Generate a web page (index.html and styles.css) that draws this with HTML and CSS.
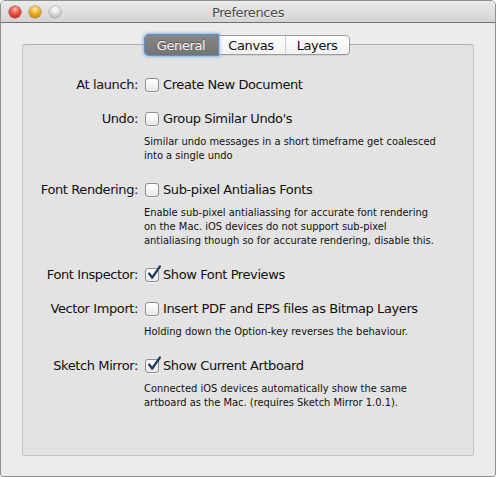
FILE: index.html
```html
<!DOCTYPE html>
<html>
<head>
<meta charset="utf-8">
<link rel="stylesheet" href="styles.css">
</head>
<body>
<div class="window">
  <div class="titlebar">
    <div class="lights">
      <span class="light red"></span>
      <span class="light yellow"></span>
      <span class="light gray"></span>
    </div>
    <div class="title">Preferences</div>
    <div></div>
  </div>
  <div class="content">
    <div class="tabs">
      <span class="tab selected">General</span>
      <span class="tab canvas">Canvas</span>
      <span class="tab layers">Layers</span>
    </div>
    <div class="box">
      <div class="form">
        <div class="label">At launch:</div>
        <div class="field">
          <label class="check"><span class="cb"></span>Create New Document</label>
        </div>

        <div class="label">Undo:</div>
        <div class="field">
          <label class="check"><span class="cb"></span>Group Similar Undo's</label>
          <p class="desc">Similar undo messages in a short timeframe get coalesced<br>into a single undo</p>
        </div>

        <div class="label">Font Rendering:</div>
        <div class="field">
          <label class="check"><span class="cb"></span>Sub-pixel Antialias Fonts</label>
          <p class="desc">Enable sub-pixel antialiassing for accurate font rendering<br>on the Mac. iOS devices do not support sub-pixel<br>antialiasing though so for accurate rendering, disable this.</p>
        </div>

        <div class="label">Font Inspector:</div>
        <div class="field">
          <label class="check"><span class="cb on"><svg viewBox="0 0 16 16" width="16" height="16"><path d="M3.2 8.6 L6.2 12.6 L13.8 1.6" fill="none" stroke="#1d3a66" stroke-width="2.4" stroke-linecap="round" stroke-linejoin="round"/></svg></span>Show Font Previews</label>
        </div>

        <div class="label">Vector Import:</div>
        <div class="field">
          <label class="check"><span class="cb"></span>Insert PDF and EPS files as Bitmap Layers</label>
          <p class="desc">Holding down the Option-key reverses the behaviour.</p>
        </div>

        <div class="label">Sketch Mirror:</div>
        <div class="field">
          <label class="check"><span class="cb on"><svg viewBox="0 0 16 16" width="16" height="16"><path d="M3.2 8.6 L6.2 12.6 L13.8 1.6" fill="none" stroke="#1d3a66" stroke-width="2.4" stroke-linecap="round" stroke-linejoin="round"/></svg></span>Show Current Artboard</label>
          <p class="desc">Connected iOS devices automatically show the same<br>artboard as the Mac. (requires Sketch Mirror 1.0.1).</p>
        </div>
      </div>
    </div>
  </div>
</div>
</body>
</html>
```
FILE: styles.css
```css
* { box-sizing: border-box; }
html, body { margin: 0; padding: 0; background: #ffffff; }
body { font-family: "DejaVu Sans", "Liberation Sans", sans-serif; color: #111111; }

.window {
  width: 496px;
  height: 477px;
  background: #ececec;
  border: 1px solid #8e8e8e;
  border-radius: 5px 5px 3px 3px;
  overflow: hidden;
  display: flex;
  flex-direction: column;
}

.titlebar {
  height: 22px;
  flex: none;
  background: linear-gradient(#ebebeb, #d3d3d3);
  border-bottom: 1px solid #727272;
  display: grid;
  grid-template-columns: 1fr auto 1fr;
  align-items: center;
}
.lights { display: flex; gap: 8px; padding-left: 8px; padding-top: 1px; }
.light {
  width: 12px; height: 12px; border-radius: 50%;
  display: block;
}
.red { background: radial-gradient(circle at 50% 28%, #ffc0b6 0, #f05a50 38%, #bd241c 85%); box-shadow: 0 0 0 0.5px #8f2620; }
.yellow { background: radial-gradient(circle at 50% 28%, #fff0b0 0, #f2b52a 38%, #c0830c 85%); box-shadow: 0 0 0 0.5px #9a6f16; }
.gray { background: radial-gradient(circle at 50% 28%, #ffffff 0, #e2e2e2 38%, #b2b2b2 85%); box-shadow: 0 0 0 0.5px #939393; }
.title {
  font-size: 13px;
  letter-spacing: -0.4px;
  color: #4a4a4a;
  text-shadow: 0 1px 0 rgba(255,255,255,0.6);
  padding-top: 1px;
}

.content {
  flex: 1;
  display: flex;
  flex-direction: column;
  align-items: center;
  padding: 12px 21px 20px 21px;
}

.tabs {
  position: relative;
  z-index: 1;
  display: flex;
  height: 20px;
  margin-left: -2px;
  background: linear-gradient(#ffffff, #f1f1f1);
  border: 1px solid #9c9c9c;
  border-radius: 4px;
  box-shadow: 0 1px 1px rgba(0,0,0,0.08);
  font-size: 13px;
  letter-spacing: -0.4px;
}
.tab {
  display: flex;
  align-items: center;
  justify-content: center;
  color: #111;
}
.tab.selected {
  width: 73px;
  margin: -1px 0 -1px -1px;
  background: linear-gradient(#868686, #747474);
  color: #f4f4f4;
  text-shadow: 0 -1px 0 rgba(0,0,0,0.35);
  border-radius: 4px 0 0 4px;
  box-shadow: 0 0 0 1px #5f8fc8, 0 0 3px 2px #8db6e6;
}
.tab.canvas { width: 67px; }
.tab.layers { width: 64px; border-left: 1px solid #cfcfcf; }

.box {
  align-self: stretch;
  flex: 1;
  margin-top: -11px;
  background: #e3e3e3;
  border: 1px solid #c4c4c4;
  border-top-color: #b0b0b0;
  border-radius: 3px;
}

.form {
  display: grid;
  grid-template-columns: 115px 1fr;
  column-gap: 7px;
  row-gap: 16px;
  padding-top: 31px;
}
.label {
  text-align: right;
  font-size: 13px;
  letter-spacing: -0.4px;
  line-height: 18px;
  height: 18px;
  white-space: nowrap;
}
.field { min-width: 0; }
.check {
  display: flex;
  align-items: center;
  font-size: 13px;
  letter-spacing: -0.4px;
  line-height: 18px;
  height: 18px;
  white-space: nowrap;
}
.cb {
  width: 14px; height: 14px;
  border: 1px solid #8f8f8f;
  border-radius: 3px;
  background: linear-gradient(#ffffff, #e8e8e8);
  box-shadow: 0 1px 0 rgba(255,255,255,0.6);
  margin-right: 4px;
  position: relative;
  flex: none;
}
.cb svg { position: absolute; left: 0; top: -4px; }
.desc {
  margin: 7px 0 2px -1px;
  font-family: "DejaVu Sans Condensed", "DejaVu Sans", sans-serif;
  font-stretch: condensed;
  font-size: 11px;
  line-height: 14px;
  white-space: nowrap;
}
```
